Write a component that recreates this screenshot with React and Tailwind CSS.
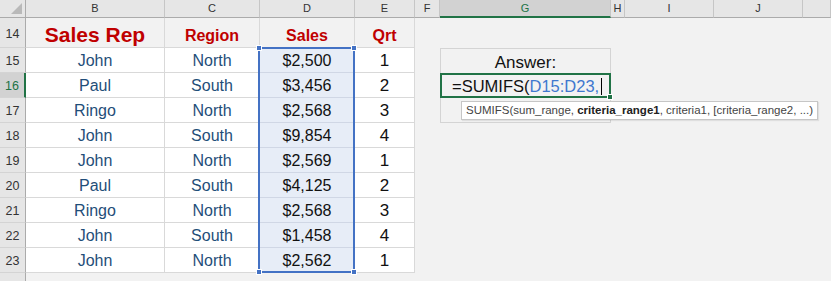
import React from 'react';

const rows = [
  ['15', 'John', 'North', '$2,500', '1'],
  ['16', 'Paul', 'South', '$3,456', '2'],
  ['17', 'Ringo', 'North', '$2,568', '3'],
  ['18', 'John', 'South', '$9,854', '4'],
  ['19', 'John', 'North', '$2,569', '1'],
  ['20', 'Paul', 'South', '$4,125', '2'],
  ['21', 'Ringo', 'North', '$2,568', '3'],
  ['22', 'John', 'South', '$1,458', '4'],
  ['23', 'John', 'North', '$2,562', '1'],
];

const cols = ['B', 'C', 'D', 'E', 'F', 'G', 'H', 'I', 'J', ''];

function ColHeader({ label }) {
  const active = label === 'G';
  return (
    <div
      className={
        'flex items-center justify-center text-[11px] border-r border-[#c6c6c6] ' +
        (active
          ? 'bg-[#d2d2d2] text-[#217346] border-b-2 border-b-[#217346]'
          : 'bg-[#e6e6e6] text-[#333] border-b border-b-[#ababab]')
      }
    >
      {label}
    </div>
  );
}

function RowHeader({ n, active, bottom }) {
  return (
    <div
      className={
        'flex justify-center text-[12.5px] border-b border-[#d4d4d4] ' +
        (bottom ? 'items-end pb-[3px] ' : 'items-center pt-[2px] ') +
        (active
          ? 'bg-[#d2d2d2] text-[#217346] border-r-2 border-r-[#217346]'
          : 'bg-[#e6e6e6] text-[#333] border-r border-r-[#ababab]')
      }
    >
      {n}
    </div>
  );
}

function Gray() {
  return <div className="bg-[#f2f2f2]" />;
}

function Handle({ pos }) {
  return <div className={'absolute w-[6px] h-[6px] bg-[#4472c4] border border-white ' + pos} />;
}

export default function App() {
  return (
    <div
      className="w-[831px] h-[281px] overflow-hidden bg-[#f2f2f2]"
      style={{ fontFamily: '"Liberation Sans", Arial, sans-serif' }}
    >
      <div className="grid grid-cols-[26px_139px_95px_95px_60px_25px_171px_14px_89px_89px_1fr] grid-rows-[18px_30px_repeat(9,25px)_25px]">
        {/* corner */}
        <div className="relative bg-[#e6e6e6] border-r border-b border-[#ababab]">
          <div className="absolute right-[3px] bottom-[3px] w-0 h-0 border-l-[11px] border-l-transparent border-b-[11px] border-b-[#b9b9b9]" />
        </div>
        {cols.map((c, i) => (
          <ColHeader key={i} label={c} />
        ))}

        {/* row 14 */}
        <RowHeader n="14" bottom />
        <div className="flex items-end justify-center pb-[2px] border-r border-b border-[#d9d9d9] text-[#c00000] font-bold text-[21px] leading-none">
          Sales Rep
        </div>
        <div className="flex items-end justify-center pb-[3px] border-r border-b border-[#d9d9d9] text-[#c00000] font-bold text-[16px] leading-none">
          Region
        </div>
        <div className="flex items-end justify-center pb-[3px] border-r border-b border-[#d9d9d9] text-[#c00000] font-bold text-[16px] leading-none">
          Sales
        </div>
        <div className="flex items-end justify-center pb-[3px] border-r border-b border-[#d9d9d9] text-[#c00000] font-bold text-[16px] leading-none">
          Qrt
        </div>
        <Gray />
        <Gray />
        <Gray />
        <Gray />
        <Gray />
        <Gray />

        {rows.map((r, i) => (
          <React.Fragment key={r[0]}>
            <RowHeader n={r[0]} active={r[0] === '16'} />
            <div className="flex items-center justify-center pt-[2px] bg-white border-r border-b border-[#d9d9d9] text-[16px] text-[#1f4e79]">
              {r[1]}
            </div>
            <div className="flex items-center justify-center pt-[2px] bg-white border-r border-b border-[#d9d9d9] text-[16px] text-[#1f4e79]">
              {r[2]}
            </div>
            <div className="relative flex items-center justify-center pt-[2px] bg-[#e7edf7] border-r border-b border-[#d0d7e5] text-[16px] text-[#111]">
              {r[3]}
              {i === 0 && (
                <div className="absolute -left-[2px] -top-px w-[97px] h-[226px] z-10 border-2 border-[#4472c4] pointer-events-none">
                  <Handle pos="-left-[4px] -top-[4px]" />
                  <Handle pos="-right-[4px] -top-[4px]" />
                  <Handle pos="-left-[4px] -bottom-[4px]" />
                  <Handle pos="-right-[4px] -bottom-[4px]" />
                </div>
              )}
            </div>
            <div className="flex items-center justify-center pt-[2px] bg-white border-r border-b border-[#d9d9d9] text-[17px] text-[#111]">
              {r[4]}
            </div>
            <Gray />
            {i === 0 && (
              <div className="flex items-center justify-center border-l border-r border-t border-[#d4d4d4] text-[17px] text-[#111] pt-[3px]">
                Answer:
              </div>
            )}
            {i === 1 && (
              <div className="relative flex items-center border-2 border-[#217346] bg-[#f2f2f2] pl-[10px] pt-[1px] text-[16.5px] text-[#111]">
                <span>=SUMIFS(</span>
                <span className="text-[#3f78cf]">D15:D23,</span>
                <span className="ml-[2px] w-px h-[17px] bg-black" />
                <div className="absolute -right-[4px] -bottom-[4px] w-[6px] h-[6px] bg-[#217346] border border-white" />
                <div className="absolute left-[19px] top-[26px] z-10 whitespace-nowrap bg-white border border-[#c6c6c6] px-[4px] py-[1px] text-[11.5px] leading-[15px] text-[#444] shadow-[1px_1px_1px_rgba(0,0,0,0.08)]">
                  SUMIFS(sum_range, <b className="text-[#222]">criteria_range1</b>, criteria1, [criteria_range2, ...)
                </div>
              </div>
            )}
            {i === 2 && <div className="border-l border-r border-b border-[#d4d4d4]" />}
            {i > 2 && <Gray />}
            <Gray />
            <Gray />
            <Gray />
            <Gray />
          </React.Fragment>
        ))}

        {/* row 24 */}
        <RowHeader n="24" />
        <Gray />
        <Gray />
        <Gray />
        <Gray />
        <Gray />
        <Gray />
        <Gray />
        <Gray />
        <Gray />
        <Gray />
      </div>
    </div>
  );
}
